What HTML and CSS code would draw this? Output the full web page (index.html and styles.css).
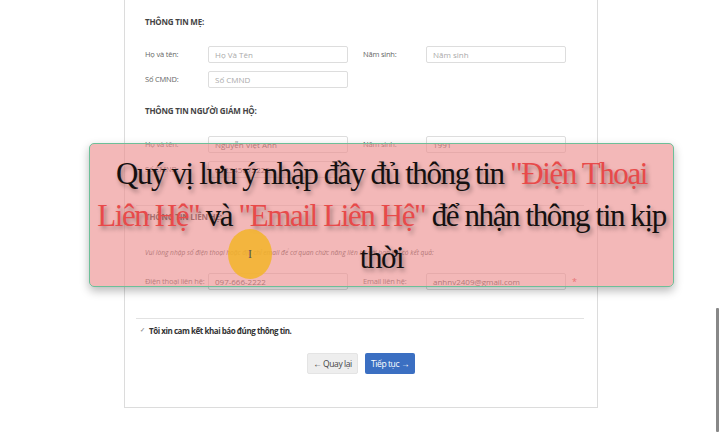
FILE: index.html
```html
<!DOCTYPE html>
<html lang="vi">
<head>
<meta charset="utf-8">
<link rel="stylesheet" href="styles.css">
</head>
<body>
<div class="page">
  <div class="card">
    <div class="heading h1">THÔNG TIN MẸ:</div>
    <div class="row r1">
      <span class="lbl">Họ và tên:</span><span class="inp ph">Họ Và Tên</span>
      <span class="lbl lbl2">Năm sinh:</span><span class="inp ph">Năm sinh</span>
    </div>
    <div class="row r2">
      <span class="lbl">Số CMND:</span><span class="inp ph">Số CMND</span>
    </div>
    <div class="heading h2">THÔNG TIN NGƯỜI GIÁM HỘ:</div>
    <div class="row r3">
      <span class="lbl">Họ và tên:</span><span class="inp">Nguyễn Việt Anh</span>
      <span class="lbl lbl2">Năm sinh:</span><span class="inp">1991</span>
    </div>
    <div class="row r4">
      <span class="lbl">Số CMND:</span><span class="inp">012345672222</span>
    </div>
    <div class="rule rule1"></div>
    <div class="heading h3">THÔNG TIN LIÊN HỆ:</div>
    <div class="note">Vui lòng nhập số điện thoại hoặc địa chỉ email để cơ quan chức năng liên hệ với bạn khi có kết quả:</div>
    <div class="row r5">
      <span class="lbl">Điện thoại liên hệ:</span><span class="inp">097-666-2222</span>
      <span class="lbl lbl2">Email liên hệ:</span><span class="inp">anhnv2409@gmail.com</span><span class="star">*</span>
    </div>
    <div class="rule rule2"></div>
    <div class="agree"><span class="chk">✓</span><span>Tôi xin cam kết khai báo đúng thông tin.</span></div>
    <div class="actions">
      <span class="btn back">← Quay lại</span>
      <span class="btn next">Tiếp tục →</span>
    </div>
  </div>
</div>
<div class="overlay">
  <p class="msg">Quý vị lưu ý nhập đầy đủ thông tin <span class="red">"Điện Thoại</span><br><span class="red">Liên Hệ"</span> và <span class="red">"Email Liên Hệ"</span> để nhận thông tin kịp<br>thời</p>
</div>
<div class="cursor"><span>I</span></div>
<div class="scroll"></div>
</body>
</html>
```
FILE: styles.css
```css
html, body {
  margin: 0;
  padding: 0;
  width: 720px;
  height: 432px;
  overflow: hidden;
  background: #ffffff;
  font-family: "Open Sans", "Noto Sans", sans-serif;
  color: #555;
}
.page {
  position: relative;
  width: 720px;
  height: 432px;
}
.card {
  margin-left: 124px;
  margin-top: -10px;
  width: 474px;
  height: 418px;
  border: 1.5px solid #dcdcdc;
  border-top: none;
  box-sizing: border-box;
  padding-left: 20px;
  display: flex;
  flex-direction: column;
}
.heading {
  font-size: 8px;
  font-weight: 700;
  color: #444;
  height: 12px;
  line-height: 12px;
  letter-spacing: -0.2px;
}
.h1 { margin-top: 26px; }
.h2 { margin-top: 17px; }
.h3 { margin-top: 5px; }
.row {
  display: flex;
  align-items: center;
  height: 18px;
  font-size: 7.5px;
  white-space: nowrap;
}
.r1 { margin-top: 17px; }
.r2 { margin-top: 7px; }
.r3 { margin-top: 18px; }
.r4 { margin-top: 7px; }
.r5 { margin-top: 14px; }
.lbl {
  width: 63px;
  color: #666;
  letter-spacing: -0.2px;
}
.lbl2 {
  width: 63px;
  margin-left: 15px;
}
.inp {
  width: 140px;
  height: 17px;
  box-sizing: border-box;
  border: 1px solid #ddd;
  border-radius: 2px;
  padding-left: 6px;
  line-height: 15px;
  color: #555;
  font-size: 8px;
}
.inp.ph { color: #aaa; }
.star {
  color: #e04848;
  margin-left: 6px;
  font-size: 9px;
}
.rule {
  height: 1px;
  background: #e2e2e2;
  margin-left: -9px;
  width: 448px;
}
.rule1 { margin-top: 27px; }
.rule2 { margin-top: 28px; }
.note {
  margin-top: 25px;
  font-size: 6.6px;
  font-style: italic;
  color: #555;
  height: 10px;
  line-height: 10px;
  white-space: nowrap;
}
.agree {
  margin-top: 4px;
  display: flex;
  align-items: center;
  gap: 3px;
  font-size: 8px;
  font-weight: 700;
  color: #333;
  margin-left: -5px;
  height: 14px;
  letter-spacing: -0.45px;
}
.chk {
  font-size: 6px;
  color: #999;
  width: 6px;
}
.actions {
  margin-top: 16px;
  display: flex;
  gap: 7px;
  margin-left: 162px;
}
.btn {
  height: 21px;
  line-height: 21px;
  font-size: 8.5px;
  border-radius: 2px;
  box-sizing: border-box;
  white-space: nowrap;
  text-align: center;
  letter-spacing: -0.4px;
}
.back {
  width: 51px;
  background: #eeeeee;
  color: #444;
  border: 1px solid #e4e4e4;
  line-height: 19px;
}
.next {
  width: 50px;
  background: #3b6fc2;
  color: #fff;
}
.overlay {
  position: absolute;
  left: 89px;
  top: 143px;
  width: 585px;
  height: 144px;
  box-sizing: border-box;
  background: rgba(236, 140, 140, 0.62);
  border: 1.5px solid #6dbf98;
  border-radius: 5px;
  box-shadow: 0 4px 10px rgba(0,0,0,0.28);
  display: flex;
  align-items: flex-start;
  justify-content: center;
}
.msg {
  margin: 9px 0 0;
  text-align: center;
  font-family: "Liberation Serif", serif;
  font-size: 31px;
  line-height: 42px;
  color: #141010;
  text-shadow: 2px 3px 4px rgba(0,0,0,0.35);
  white-space: nowrap;
  letter-spacing: -1.4px;
}
.red { color: #e84a4a; }
.cursor {
  position: absolute;
  left: 228px;
  top: 229px;
  width: 44px;
  height: 50px;
  border-radius: 50%;
  background: rgba(242, 180, 40, 0.85);
  display: flex;
  align-items: center;
  justify-content: center;
  font-family: "Liberation Serif", serif;
  font-size: 12px;
  color: #555;
}
.scroll {
  position: absolute;
  left: 716px;
  top: 308px;
  width: 3px;
  height: 124px;
  background: #888;
  border-radius: 1px;
}
```
